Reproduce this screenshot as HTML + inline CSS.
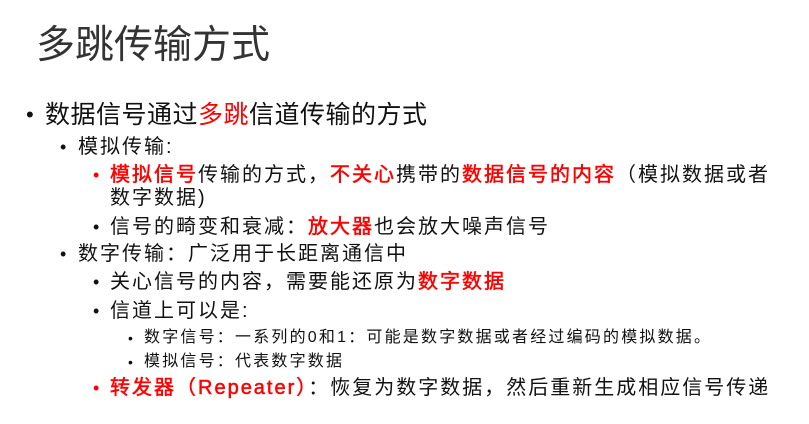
<!DOCTYPE html>
<html><head><meta charset="utf-8"><style>
body{margin:0;width:809px;height:424px;background:#fff;overflow:hidden;position:relative;font-family:"Liberation Sans","Noto Sans CJK SC",sans-serif;color:#111}
.l{position:absolute;white-space:nowrap;line-height:1}
.r{color:#f00;-webkit-text-stroke:0.5px #f00}
.b{position:absolute;line-height:1}
.m{letter-spacing:2px}
.s{letter-spacing:2.2px}
</style></head><body>
<div class="l" style="left:36px;top:26px;font-size:39px;color:#333">多跳传输方式</div>

<div class="b" style="left:26px;top:104px;font-size:22px">•</div>
<div class="l" style="left:45px;top:103px;font-size:25px;letter-spacing:0.5px">数据信号通过<span style="color:#f00">多跳</span>信道传输的方式</div>

<div class="b" style="left:60px;top:138px;font-size:18px">•</div>
<div class="l m" style="left:78px;top:137px;font-size:20px">模拟传输:</div>

<div class="b" style="left:93px;top:166px;font-size:18px;color:#f00">•</div>
<div class="l m" style="left:110px;top:165px;font-size:20px"><span class="r">模拟信号</span>传输的方式，<span class="r">不关心</span>携带的<span class="r">数据信号的内容</span>（模拟数据或者</div>
<div class="l m" style="left:110px;top:188px;font-size:20px">数字数据)</div>

<div class="b" style="left:93px;top:218px;font-size:18px">•</div>
<div class="l m" style="left:110px;top:217px;font-size:20px">信号的畸变和衰减：<span class="r">放大器</span>也会放大噪声信号</div>

<div class="b" style="left:60px;top:245px;font-size:18px">•</div>
<div class="l m" style="left:78px;top:244px;font-size:20px">数字传输：广泛用于长距离通信中</div>

<div class="b" style="left:93px;top:273px;font-size:18px">•</div>
<div class="l m" style="left:110px;top:272px;font-size:20px">关心信号的内容，需要能还原为<span class="r">数字数据</span></div>

<div class="b" style="left:93px;top:302px;font-size:18px">•</div>
<div class="l m" style="left:110px;top:301px;font-size:20px">信道上可以是:</div>

<div class="b" style="left:128px;top:331px;font-size:14px">•</div>
<div class="l s" style="left:144px;top:330px;font-size:16px">数字信号：一系列的0和1：可能是数字数据或者经过编码的模拟数据。</div>

<div class="b" style="left:128px;top:355px;font-size:14px">•</div>
<div class="l s" style="left:144px;top:354px;font-size:16px">模拟信号：代表数字数据</div>

<div class="b" style="left:93px;top:379px;font-size:18px;color:#f00">•</div>
<div class="l m" style="left:110px;top:378px;font-size:20px"><span class="r">转发器（Repeater）</span>：恢复为数字数据，然后重新生成相应信号传递</div>
</body></html>
